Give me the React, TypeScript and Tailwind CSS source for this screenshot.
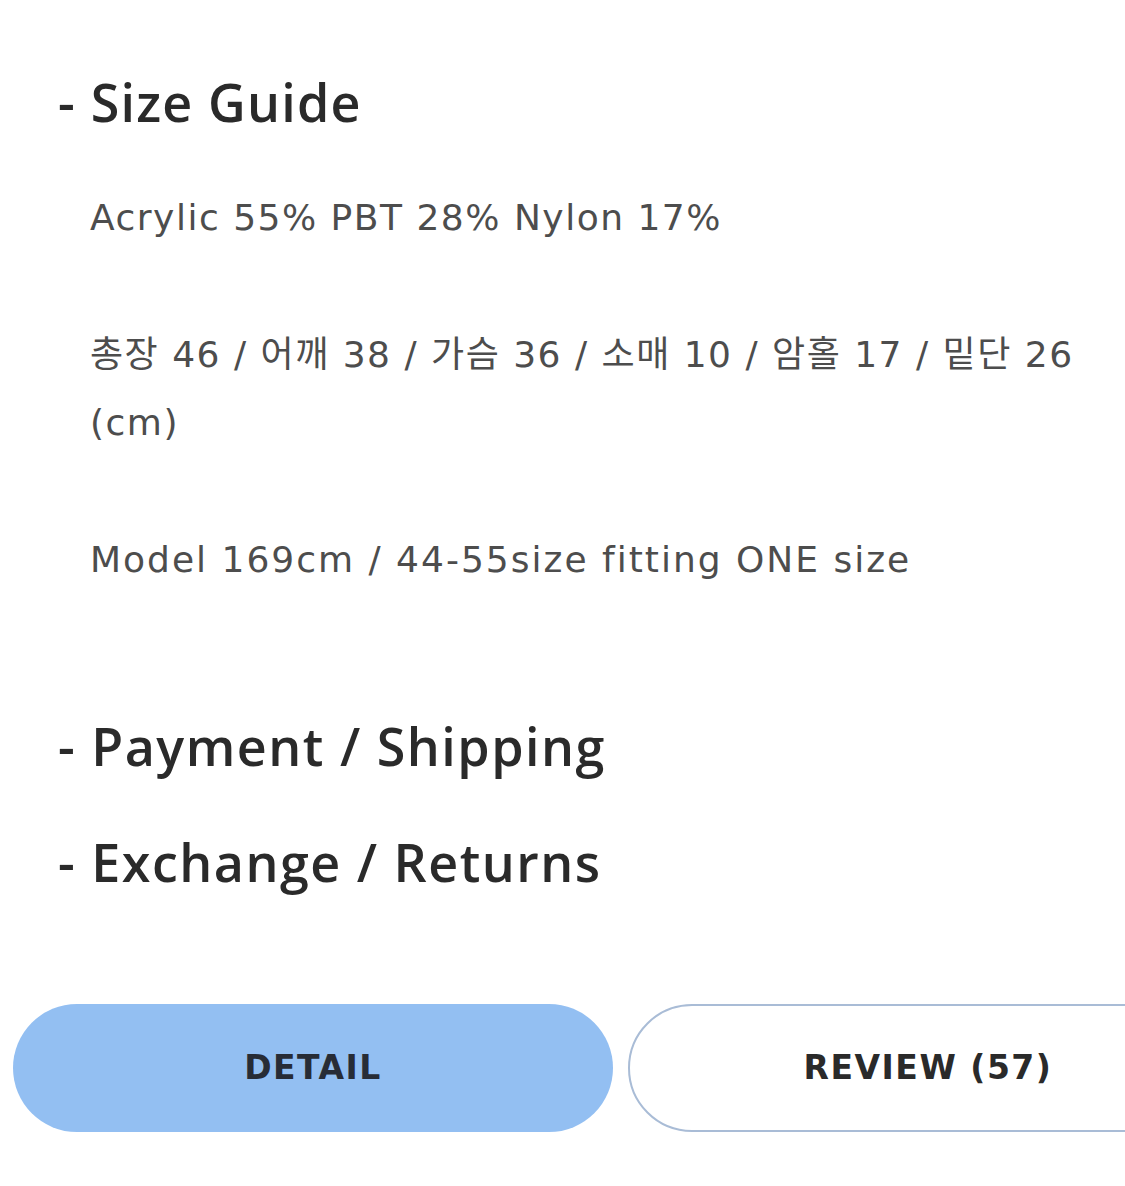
export default function App() {
  const heading = { fontFamily: '"Open Sans", "Noto Sans CJK KR", sans-serif' };
  const body = { fontFamily: '"DejaVu Sans", "Noto Sans CJK KR", sans-serif' };

  return (
    <div className="w-[1125px] h-[1186px] bg-white overflow-hidden">
      <div className="pt-[70px]">
        <h2 style={heading} className="pl-[58px] text-[52px] leading-[64px] font-semibold text-[#2a2a2a] tracking-[1.2px]">
          - Size Guide
        </h2>

        <div style={body} className="mt-[50px] pl-[90px] pr-[20px] text-[36px] leading-[68px] text-[#4d4d4d] tracking-[1.5px]">
          <p>Acrylic 55% PBT 28% Nylon 17%</p>
          <p className="mt-[69px]">
            총장 46 / 어깨 38 / 가슴 36 / 소매 10 / 암홀 17 / 밑단 26
            <br />
            (cm)
          </p>
          <p className="mt-[69px] tracking-[2px]">Model 169cm / 44-55size fitting ONE size</p>
        </div>

        <h2 style={heading} className="mt-[120px] pl-[58px] text-[52px] leading-[64px] font-semibold text-[#2a2a2a] tracking-[1.5px]">
          - Payment / Shipping
        </h2>
        <h2 style={heading} className="mt-[52px] pl-[58px] text-[52px] leading-[64px] font-semibold text-[#2a2a2a] tracking-[1.5px]">
          - Exchange / Returns
        </h2>

        <div style={body} className="mt-[110px] flex gap-[15px] pl-[13px]">
          <button className="w-[600px] h-[128px] shrink-0 rounded-full bg-[#93bff2] text-[33px] font-bold text-[#272c36] tracking-[1.5px]">
            DETAIL
          </button>
          <button className="w-[600px] h-[128px] shrink-0 rounded-full border-2 border-[#a9bcd6] bg-white text-[33px] font-bold text-[#2a2a2a] tracking-[1.5px]">
            REVIEW (57)
          </button>
        </div>
      </div>
    </div>
  );
}
